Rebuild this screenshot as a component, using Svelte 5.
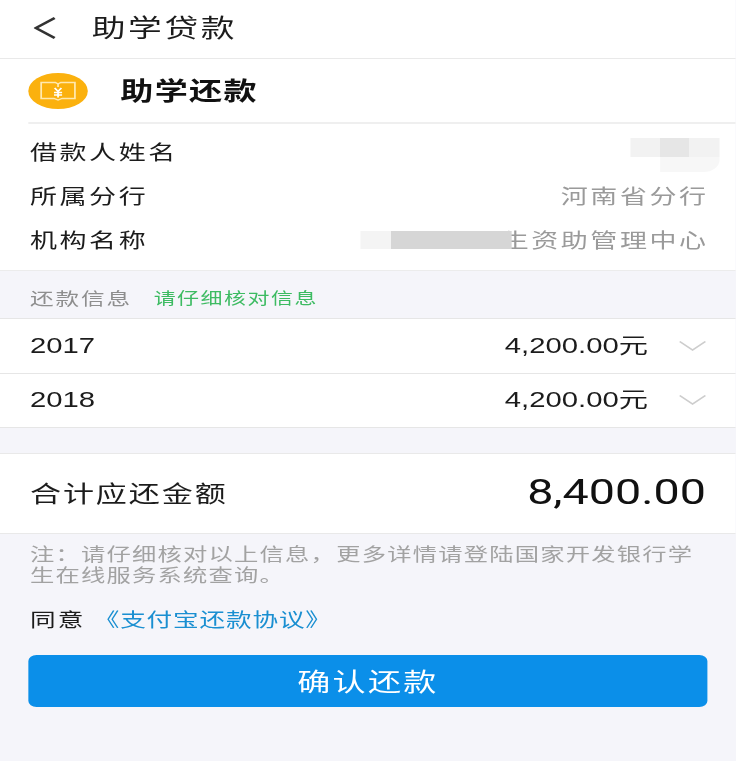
<script>
	const loans = [
		{ year: '2017', amount: '4,200.00元' },
		{ year: '2018', amount: '4,200.00元' }
	];
</script>

<div class="page">
	<header class="topbar">
		<svg class="back" viewBox="0 0 17 28" width="17" height="28" fill="none">
			<path d="M15.5 4 L1.5 14 L15.5 24" stroke="#333" stroke-width="2.2" />
		</svg>
		<h1>助学贷款</h1>
	</header>

	<section class="card">
		<div class="brand">
			<div class="badge">
				<svg viewBox="0 0 44 36" width="44" height="36" fill="none" stroke="#ffe9b0" stroke-width="1.3">
					<path d="M20 9.5 H9.5 V25.5 H19 L22 27 L25 25.5 H34.5 V9.5 H24 L22 11 Z" />
					<path d="M22 11 V14" />
					<path d="M19.5 15 L22 18.5 L24.5 15 M22 18.5 V24.5 M19 19.5 H25 M19 22 H25" stroke="#fff" />
				</svg>
			</div>
			<h2>助学还款</h2>
		</div>
		<div class="info">
			<div class="info-row"><span>借款人姓名</span></div>
			<div class="info-row"><span>所属分行</span><span class="muted">河南省分行</span></div>
			<div class="info-row"><span>机构名称</span><span class="muted">生资助管理中心</span></div>
			<div class="mask mask-name"></div>
			<div class="mask mask-name-low"></div>
			<div class="mask mask-org"></div>
		</div>
	</section>

	<div class="section-label">
		<span>还款信息</span>
		<em>请仔细核对信息</em>
	</div>

	<section class="loans">
		{#each loans as loan}
			<div class="loan">
				<span class="year">{loan.year}</span>
				<span class="amount">{loan.amount}</span>
				<svg viewBox="0 0 20 12" width="20" height="12" fill="none">
					<path d="M0.5 1.5 L10 10 L19.5 1.5" stroke="#cdcdcd" stroke-width="1.5" />
				</svg>
			</div>
		{/each}
	</section>

	<section class="total">
		<span class="total-label">合计应还金额</span>
		<span class="total-value">8,400.00</span>
	</section>

	<p class="note">注：请仔细核对以上信息，更多详情请登陆国家开发银行学生在线服务系统查询。</p>

	<p class="agree">同意<a href="#agreement">《支付宝还款协议》</a></p>

	<button class="confirm">确认还款</button>
</div>

<style>
	:global(body) {
		margin: 0;
		background: #f5f5fa;
		overflow: hidden;
	}

	/* the whole screen is stretched sideways, 545px wide becomes 736 */
	.page {
		width: 545.2px;
		height: 761px;
		overflow: hidden;
		transform: scaleX(1.35);
		transform-origin: 0 0;
		background: #f5f5fa;
		color: #1c1c1c;
		font-family: "Noto Sans CJK SC", "Liberation Sans", sans-serif;
	}

	.topbar {
		display: flex;
		align-items: center;
		gap: 26px;
		box-sizing: border-box;
		height: 59px;
		padding: 0 0 3px 25px;
		background: #fff;
		border-bottom: 1px solid #e9e9e9;
	}

	.back {
		flex: none;
	}

	h1 {
		margin: 0 0 3px;
		font-size: 25px;
		line-height: 30px;
		font-weight: 400;
		letter-spacing: 1.9px;
	}

	.card {
		background: #fff;
		border-bottom: 1px solid #ececec;
	}

	.brand {
		display: flex;
		align-items: center;
		gap: 24px;
		box-sizing: border-box;
		height: 65px;
		padding-bottom: 2px;
		margin-left: 20.7px;
		border-bottom: 2px solid #efefef;
	}

	.badge {
		display: flex;
		width: 44.4px;
		height: 36px;
		margin-top: 2px;
		border-radius: 50%;
		background: #fbb10e;
	}

	h2 {
		margin: 0;
		font-size: 24.5px;
		line-height: 30px;
		font-weight: 700;
		letter-spacing: 1px;
		color: #111;
	}

	.info {
		position: relative;
		box-sizing: border-box;
		height: 146px;
		padding: 5px 22.2px 9px;
	}

	.info-row {
		display: flex;
		justify-content: space-between;
		align-items: center;
		height: 44px;
		font-size: 20px;
		letter-spacing: 1.9px;
	}

	.muted {
		margin-right: -1.9px;
		color: #9a9a9a;
	}

	.mask {
		position: absolute;
		filter: blur(0.5px);
	}

	.mask-name {
		top: 14px;
		left: 466.7px;
		width: 66.7px;
		height: 19px;
		background: linear-gradient(90deg, #f2f2f2 0 33%, #e6e6e6 33% 66%, #f2f2f2 66%);
	}

	.mask-name-low {
		top: 33px;
		left: 489px;
		width: 44px;
		height: 15px;
		border-bottom-right-radius: 12px;
		background: #f7f7f7;
	}

	.mask-org {
		top: 107px;
		left: 266.7px;
		width: 112.6px;
		height: 18px;
		background: linear-gradient(90deg, #f4f4f4 0 20%, #d6d6d6 20%);
	}

	.section-label {
		display: flex;
		align-items: center;
		gap: 16px;
		box-sizing: border-box;
		height: 47px;
		padding: 5px 0 0 22.2px;
		font-size: 17.5px;
		letter-spacing: 1.4px;
		color: #8e8e8e;
	}

	.section-label em {
		font-style: normal;
		font-size: 16.3px;
		letter-spacing: 1.1px;
		color: #3dbb62;
	}

	.loans {
		background: #fff;
		border-top: 1px solid #e6e6e6;
	}

	.loan {
		display: flex;
		align-items: center;
		height: 53.5px;
		padding: 0 22.2px;
		border-bottom: 1px solid #e6e6e6;
		font-family: "Liberation Sans", "Noto Sans CJK SC", sans-serif;
		font-size: 21.7px;
		line-height: 24px;
	}

	.year {
		flex: 1;
	}

	.amount {
		margin-right: 23px;
	}

	.total {
		display: flex;
		align-items: center;
		justify-content: space-between;
		box-sizing: border-box;
		height: 81px;
		margin-top: 25px;
		padding: 0 22.2px 4px;
		background: #fff;
		border-top: 1px solid #e9e9e9;
		border-bottom: 1px solid #e9e9e9;
	}

	.total-label {
		font-size: 23px;
		letter-spacing: 1.4px;
	}

	.total-value {
		font-family: Roboto, "Liberation Sans", sans-serif;
		font-size: 34.6px;
		font-weight: 400;
		color: #111;
	}

	.note {
		margin: 9px 0 0;
		padding: 0 22.2px;
		font-size: 18px;
		line-height: 21px;
		letter-spacing: 0.9px;
		color: #a2a2a2;
	}

	.agree {
		margin: 20px 0 0;
		padding: 0 22.2px;
		font-size: 19px;
		line-height: 28px;
		letter-spacing: 1.6px;
	}

	.agree a {
		margin-left: 6px;
		letter-spacing: 0.6px;
		color: #1a8fd1;
		text-decoration: none;
	}

	.confirm {
		display: block;
		width: 503.7px;
		height: 52px;
		margin: 22px 0 0 20.7px;
		padding: 0 0 2px;
		border: none;
		border-radius: 6px;
		background: #0b8fe9;
		color: #fff;
		font: inherit;
		font-size: 24.5px;
		letter-spacing: 1.7px;
	}
</style>
